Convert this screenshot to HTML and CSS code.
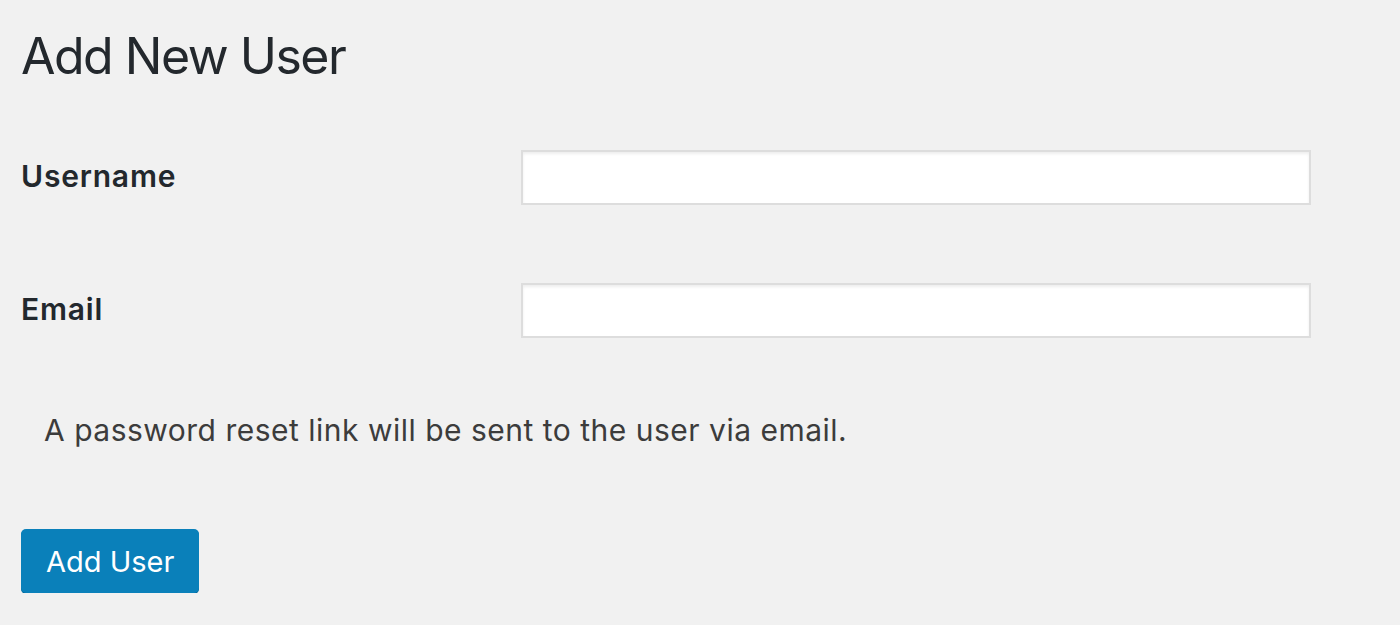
FILE: index.html
```html
<!DOCTYPE html>
<html>
<head>
<meta charset="utf-8">
<link rel="stylesheet" href="styles.css">
</head>
<body>
<div class="wrap">
  <h1 class="title">Add New User</h1>
  <form class="form">
    <div class="row row-first">
      <label class="label" for="u">Username</label>
      <input class="input" id="u" type="text">
    </div>
    <div class="row">
      <label class="label" for="e">Email</label>
      <input class="input" id="e" type="text">
    </div>
    <p class="note">A password reset link will be sent to the user via email.</p>
    <button class="button" type="button">Add User</button>
  </form>
</div>
</body>
</html>
```

FILE: styles.css
```css
html, body {
  margin: 0;
  padding: 0;
  background: #f1f1f1;
}
body {
  font-family: Inter, "Noto Sans", sans-serif;
  color: #23282d;
}
.wrap {
  padding: 0 0 0 21px;
}
.title {
  margin: 0;
  padding-top: 28px;
  font-size: 50px;
  font-weight: 400;
  letter-spacing: -1.5px;
  line-height: 56px;
  color: #23282d;
}
.form {
  display: flex;
  flex-direction: column;
  align-items: flex-start;
}
.row {
  display: flex;
  align-items: center;
  margin-top: 78px;
}
.row-first {
  margin-top: 66px;
}
.label {
  width: 500px;
  font-size: 30px;
  font-weight: 600;
  letter-spacing: 0.8px;
  color: #23282d;
  padding-bottom: 3px;
}
.input {
  box-sizing: border-box;
  width: 790px;
  height: 55px;
  margin: 0;
  border: 2px solid #dddddd;
  background: #fff;
  box-shadow: inset 0 2px 3px rgba(0,0,0,0.07);
}
.note {
  margin: 72px 0 0 23px;
  font-size: 30px;
  line-height: 40px;
  letter-spacing: 0.5px;
  color: #3c3c3c;
}
.button {
  margin-top: 79px;
  height: 64px;
  padding: 0 25px;
  border: none;
  border-radius: 5px;
  background: #0a80ba;
  color: #fff;
  font-family: Inter, "Noto Sans", sans-serif;
  font-size: 29px;
  box-shadow: 0 1px 0 #006799;
}
```
